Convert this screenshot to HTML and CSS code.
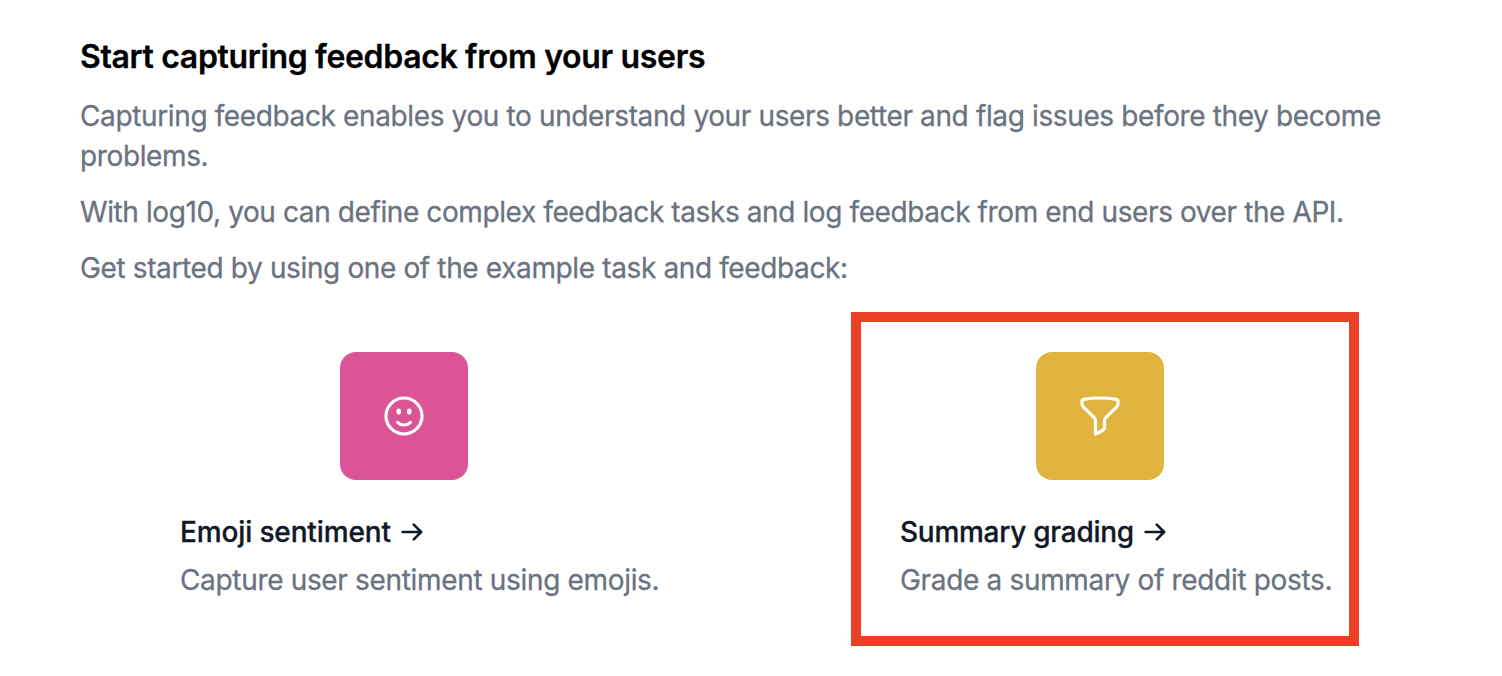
FILE: index.html
```html
<!DOCTYPE html>
<html lang="en">
<head>
<meta charset="utf-8">
<title>Feedback</title>
<link rel="stylesheet" href="styles.css">
</head>
<body>
<main class="page">
  <h1 class="title">Start capturing feedback from your users</h1>
  <p class="copy">Capturing feedback enables you to understand your users better and flag issues before they become<br>problems.</p>
  <p class="copy tight">With log10, you can define complex feedback tasks and log feedback from end users over the API.</p>
  <p class="copy">Get started by using one of the example task and feedback:</p>
  <div class="cards">
    <a class="card">
      <div class="tile pink">
        <svg class="icon" viewBox="0 0 24 24"><path d="M15.182 15.182a4.5 4.5 0 0 1-6.364 0M21 12a9 9 0 1 1-18 0 9 9 0 0 1 18 0ZM9.75 9.75c0 .414-.168.75-.375.75S9 10.164 9 9.75 9.168 9 9.375 9s.375.336.375.75Zm-.375 0h.008v.015h-.008V9.75Zm5.625 0c0 .414-.168.75-.375.75s-.375-.336-.375-.75.168-.75.375-.75.375.336.375.75Zm-.375 0h.008v.015h-.008V9.75Z"/></svg>
      </div>
      <h2 class="name"><span>Emoji sentiment</span><svg class="arrow" viewBox="0 0 22 18"><path d="M1.6 9H20M12.8 1.7L20.1 9L12.8 16.3"/></svg></h2>
      <p class="desc">Capture user sentiment using emojis.</p>
    </a>
    <a class="card selected">
      <div class="tile yellow">
        <svg class="icon" viewBox="0 0 24 24"><path d="M12 3c2.755 0 5.455.232 8.083.678.533.09.917.556.917 1.096v1.044a2.25 2.25 0 0 1-.659 1.591l-5.432 5.432a2.25 2.25 0 0 0-.659 1.591v2.927a2.25 2.25 0 0 1-1.244 2.013L9.75 21v-6.568a2.25 2.25 0 0 0-.659-1.591L3.659 7.409A2.25 2.25 0 0 1 3 5.818V4.774c0-.54.384-1.006.917-1.096A48.32 48.32 0 0 1 12 3Z"/></svg>
      </div>
      <h2 class="name"><span>Summary grading</span><svg class="arrow" viewBox="0 0 22 18"><path d="M1.6 9H20M12.8 1.7L20.1 9L12.8 16.3"/></svg></h2>
      <p class="desc">Grade a summary of reddit posts.</p>
    </a>
  </div>
</main>
</body>
</html>
```
FILE: styles.css
```css
* { box-sizing: border-box; }
body { margin: 0; background: #fff; font-family: Inter, sans-serif; -webkit-text-stroke: 0.3px currentColor; }
.page { width: 1502px; height: 676px; padding: 37px 80px 0; overflow: hidden; }
.title { margin: 0 0 19px; font-size: 32px; line-height: 40px; font-weight: 600; letter-spacing: -0.34px; color: #000; white-space: nowrap; }
.copy { margin: 0 0 16px; font-size: 28px; line-height: 40px; font-weight: 400; letter-spacing: -0.37px; color: #6b7280; white-space: nowrap; }
.tight { letter-spacing: -0.4px; }
.cards { display: flex; margin-top: 24px; padding-left: 61px; gap: 202px; }
.card { width: 508px; height: 334px; padding: 30px 29px; border: 10px solid transparent; }
.selected { border-color: #ea4025; padding-left: 39px; }
.tile { width: 128px; height: 128px; border-radius: 16px; display: flex; align-items: center; justify-content: center; margin-left: 160px; }
.selected .tile { margin-left: 136px; }
.pink { background: #db5496; }
.yellow { background: #e1b43f; }
.icon { width: 48px; height: 48px; fill: none; stroke: #fff; stroke-width: 1.6; stroke-linecap: round; stroke-linejoin: round; }
.name { display: flex; align-items: center; gap: 10px; margin: 32px 0 0; font-size: 28px; line-height: 40px; font-weight: 500; letter-spacing: -0.14px; color: #111827; white-space: nowrap; }
.selected .name { letter-spacing: -0.27px; }
.arrow { width: 22px; height: 18px; fill: none; stroke: currentColor; stroke-width: 2.6; stroke-linecap: round; stroke-linejoin: round; }
.desc { margin: 8px 0 0; font-size: 28px; line-height: 40px; font-weight: 400; letter-spacing: -0.33px; color: #6b7280; white-space: nowrap; }
```
